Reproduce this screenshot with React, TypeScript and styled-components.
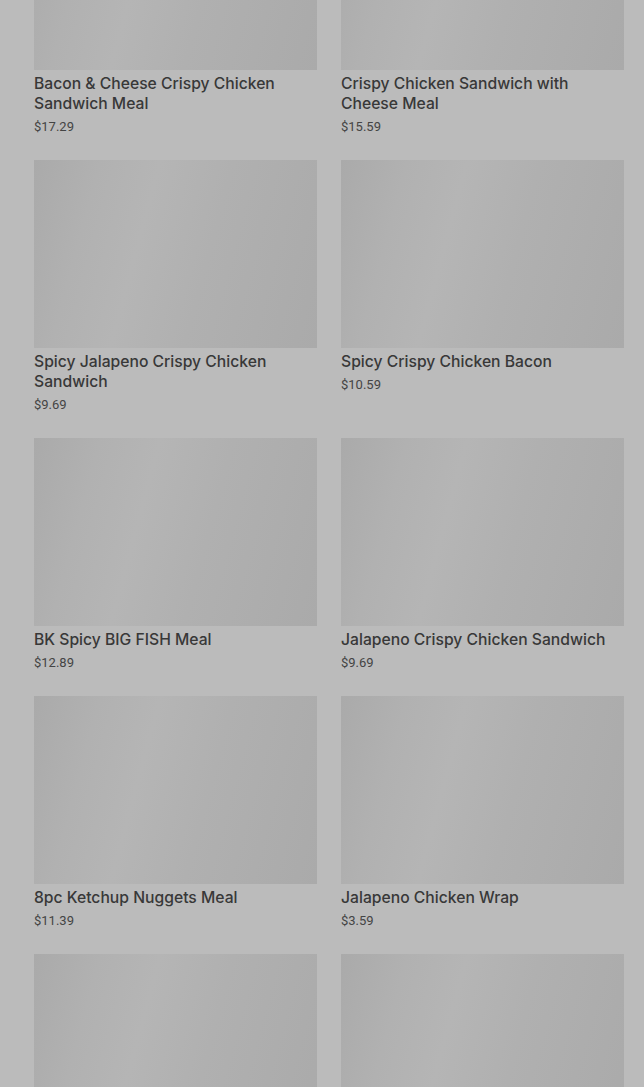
import React, {FC} from "react";
import styled, {createGlobalStyle} from "styled-components";

const GlobalStyle = createGlobalStyle`
  html, body {
    margin: 0;
    padding: 0;
    background: #bbbbbb;
    overflow: hidden;
  }
  body {
    font-family: Inter, Roboto, "Liberation Sans", Arial, sans-serif;
  }
`;

interface MenuItem {
  name: string;
  price: string;
}

const items: MenuItem[] = [
  {name: "Bacon & Cheese Crispy Chicken Sandwich Meal", price: "$17.29"},
  {name: "Crispy Chicken Sandwich with Cheese Meal", price: "$15.59"},
  {name: "Spicy Jalapeno Crispy Chicken Sandwich", price: "$9.69"},
  {name: "Spicy Crispy Chicken Bacon", price: "$10.59"},
  {name: "BK Spicy BIG FISH Meal", price: "$12.89"},
  {name: "Jalapeno Crispy Chicken Sandwich", price: "$9.69"},
  {name: "8pc Ketchup Nuggets Meal", price: "$11.39"},
  {name: "Jalapeno Chicken Wrap", price: "$3.59"},
  {name: "", price: ""},
  {name: "", price: ""},
];

const Page = styled.div`
  height: 1087px;
  overflow: hidden;
  background: #bbbbbb;
`;

const Grid = styled.div`
  display: grid;
  grid-template-columns: 283px 283px;
  column-gap: 24px;
  row-gap: 24px;
  margin-top: -118px;
  padding: 0 20px 0 34px;
`;

const Card = styled.div`
  display: flex;
  flex-direction: column;
`;

const Thumb = styled.div`
  height: 188px;
  background: linear-gradient(105deg, #aaaaaa 0%, #b1b1b1 20%, #b5b5b5 38%, #b0b0b0 60%, #aaaaaa 100%);
`;

const Title = styled.div`
  margin-top: 4px;
  font-size: 15.7px;
  line-height: 20px;
  font-weight: 500;
  color: #383838;
`;

const Price = styled.div`
  margin-top: 4px;
  font-family: Roboto, "Liberation Sans", Arial, sans-serif;
  font-size: 13px;
  line-height: 18px;
  color: #444444;
`;

const ProductCard: FC<{item: MenuItem}> = ({item}) => (
  <Card>
    <Thumb/>
    {item.name && <Title>{item.name}</Title>}
    {item.price && <Price>{item.price}</Price>}
  </Card>
);

export default function App() {
  return (
    <Page>
      <GlobalStyle/>
      <Grid>
        {items.map((item, i) => <ProductCard key={i} item={item}/>)}
      </Grid>
    </Page>
  );
}
